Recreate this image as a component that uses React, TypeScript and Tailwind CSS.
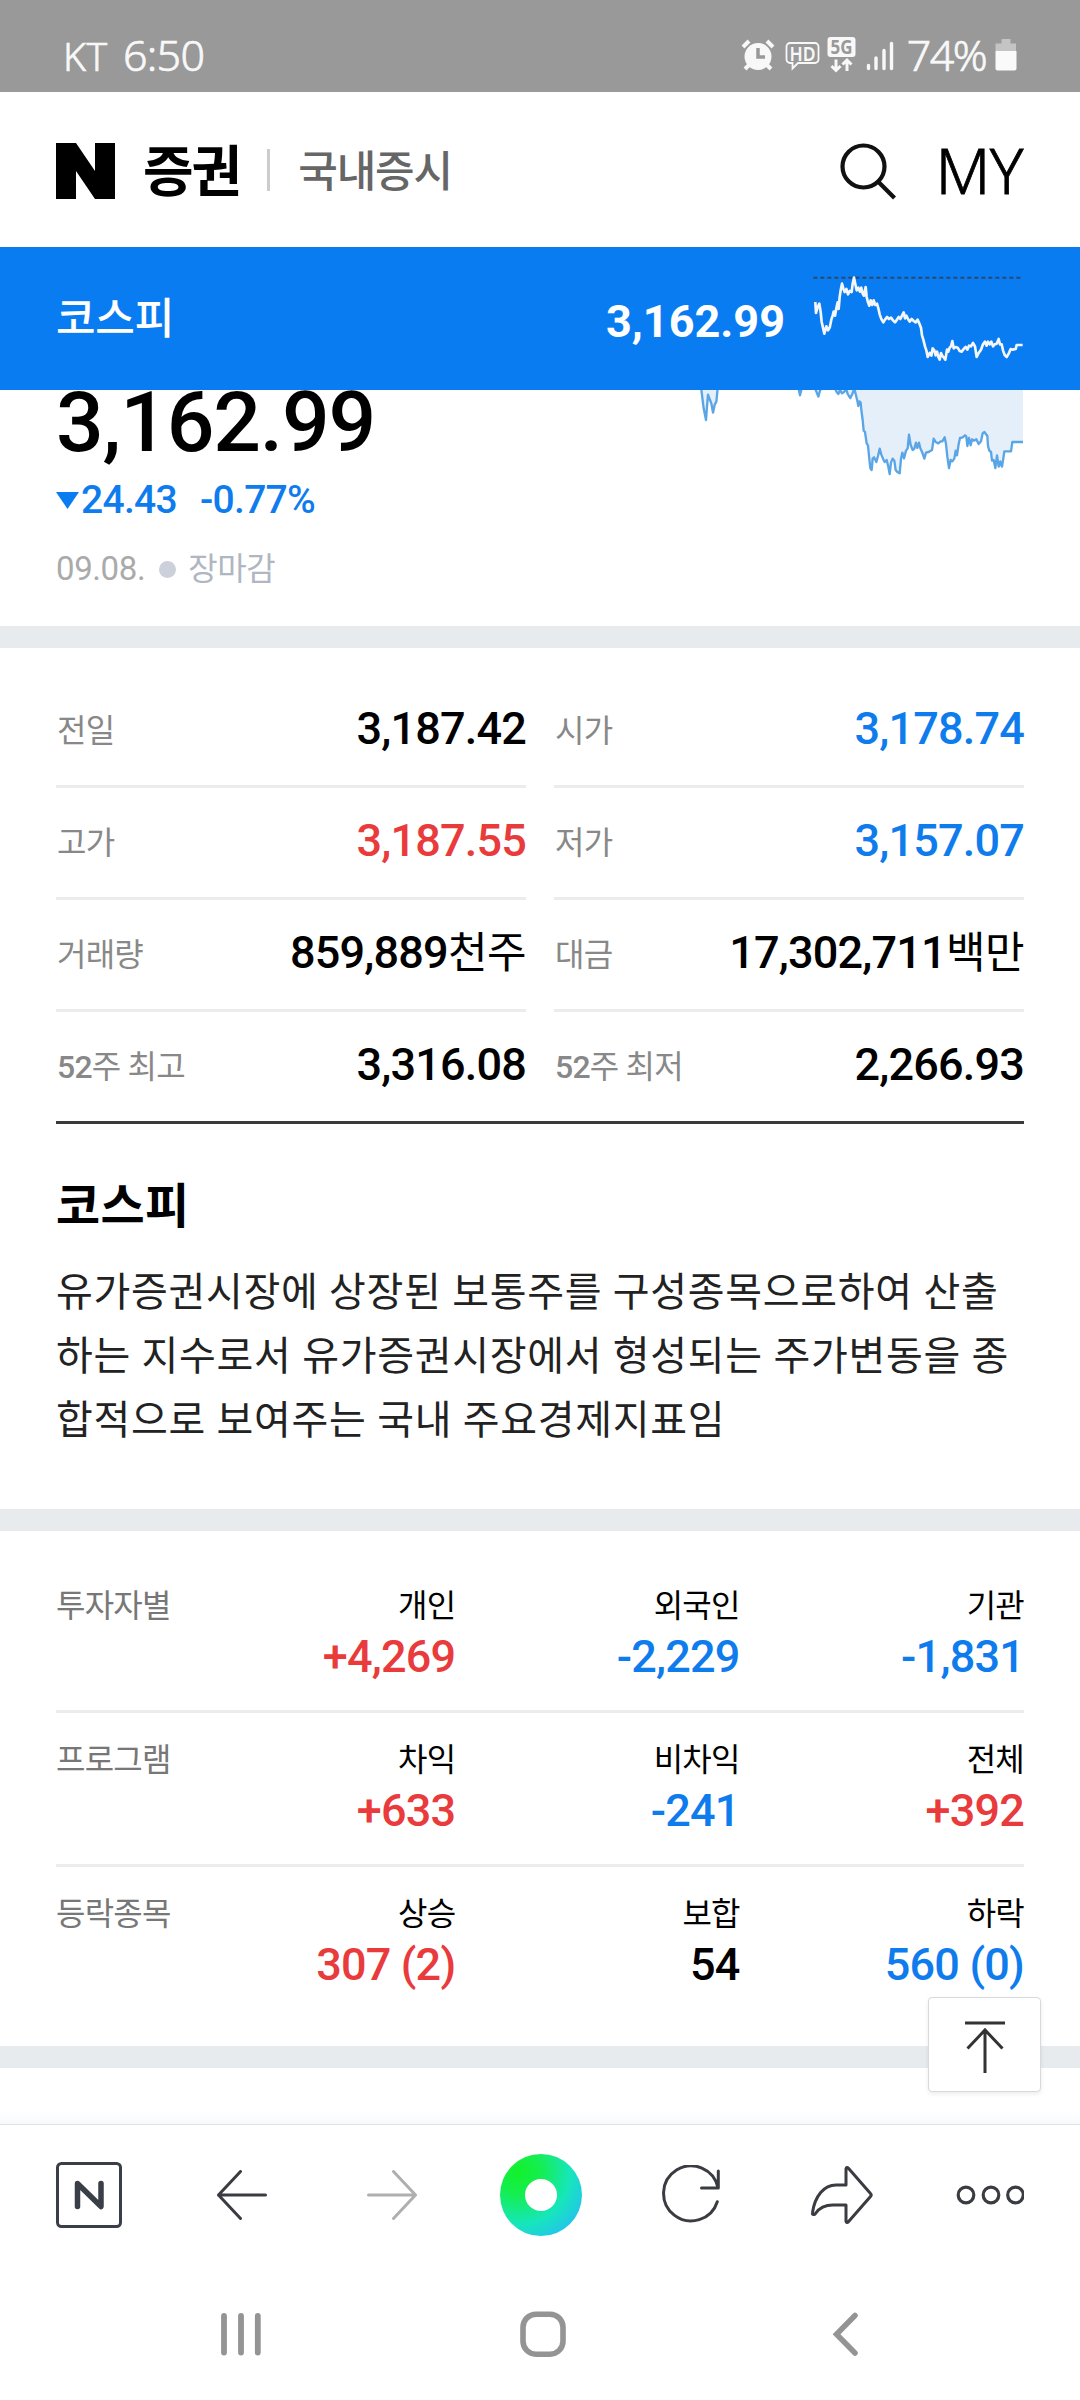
import React from 'react';

type Tone = 'up' | 'down' | 'flat';

interface Quote {
  label: React.ReactNode;
  value: string;
  unit?: string;
  tone?: Tone;
}

interface Cell {
  label: string;
  value: string;
  tone: Tone;
}

interface TrendRow {
  title: string;
  cells: Cell[];
}

const toneClasses: Record<Tone, string> = {
  up: 'text-[#e93a3c]',
  down: 'text-[#0f7cee]',
  flat: 'text-black'
};

const quotes: Quote[][] = [
  [
    { label: '전일', value: '3,187.42' },
    { label: '시가', value: '3,178.74', tone: 'down' }
  ],
  [
    { label: '고가', value: '3,187.55', tone: 'up' },
    { label: '저가', value: '3,157.07', tone: 'down' }
  ],
  [
    { label: '거래량', value: '859,889', unit: '천주' },
    { label: '대금', value: '17,302,711', unit: '백만' }
  ],
  [
    { label: <><span className="font-medium">52</span>주 최고</>, value: '3,316.08' },
    { label: <><span className="font-medium">52</span>주 최저</>, value: '2,266.93' }
  ]
];

const trends: TrendRow[] = [
  {
    title: '투자자별',
    cells: [
      { label: '개인', value: '+4,269', tone: 'up' },
      { label: '외국인', value: '-2,229', tone: 'down' },
      { label: '기관', value: '-1,831', tone: 'down' }
    ]
  },
  {
    title: '프로그램',
    cells: [
      { label: '차익', value: '+633', tone: 'up' },
      { label: '비차익', value: '-241', tone: 'down' },
      { label: '전체', value: '+392', tone: 'up' }
    ]
  },
  {
    title: '등락종목',
    cells: [
      { label: '상승', value: '307 (2)', tone: 'up' },
      { label: '보합', value: '54', tone: 'flat' },
      { label: '하락', value: '560 (0)', tone: 'down' }
    ]
  }
];

const sparkPoints =
  '705,185 707,218 712,200 717,190 721,215 724,245 728,262 732,280 738,258 743,270 748,262 753,238 757,226 760,214 764,226 768,204 772,186 775,206 778,170 781,150 785,130 789,145 793,155 798,146 803,162 808,152 814,155 817,130 821,112 825,132 829,150 834,142 839,154 843,142 847,160 851,166 856,140 859,170 863,186 867,196 871,180 876,194 880,180 885,194 890,190 894,204 898,222 903,236 909,246 914,238 920,230 926,236 932,232 938,240 944,246 950,238 955,230 960,236 965,226 970,216 974,234 978,226 983,236 988,244 994,236 1000,242 1006,246 1012,238 1018,252 1022,262 1025,285 1029,298 1034,318 1038,330 1042,350 1048,338 1053,346 1057,324 1062,330 1066,345 1070,334 1074,350 1078,358 1082,338 1087,348 1091,352 1095,358 1100,328 1104,334 1108,322 1112,318 1116,302 1120,324 1126,320 1132,322 1138,332 1144,334 1150,326 1156,320 1161,328 1166,316 1172,318 1178,308 1184,318 1189,350 1195,338 1202,328 1208,312 1214,304 1219,316 1223,304 1228,312 1233,304 1238,318 1243,312 1249,310 1255,296 1259,312 1264,312 1268,330 1273,344 1279,350 1285,340 1291,326 1297,328 1306,326 1309,314 1327,314';

const dipPoints = '361,440 364,465 369,505 376,540 379,500 382,464 388,480 392,490 397,518 402,494 407,485 410,455 412,440';

const midPoints = '652,440 655,452 658,466 663,446 700,440 706,452 713,470 719,448 760,440 768,456 773,462 778,450 784,460 790,456 797,448 801,462 806,470 809,474 815,462 821,446 825,462 830,482 833,498 836,484 840,488 842,510 846,540 849,572 853,576 858,610 862,616 865,648 869,684 873,690 876,656 880,652 887,666 892,648 897,626 902,644 907,656 912,666 918,660 923,680 927,702 931,668 936,656 941,662 945,690 950,696 957,700 961,656 965,638 970,655 976,632 981,625 985,584 990,615 996,630 1001,626 1006,608 1010,624 1015,608 1019,625 1025,638 1031,656 1036,638 1044,636 1054,630 1059,596 1065,606 1073,610 1080,604 1085,604 1092,592 1096,612 1100,650 1105,684 1110,660 1115,664 1121,656 1125,632 1129,646 1134,612 1138,594 1146,592 1153,586 1157,590 1160,618 1165,594 1170,616 1174,598 1180,602 1187,598 1194,612 1201,604 1206,580 1211,576 1220,588 1222,618 1226,632 1231,636 1234,662 1239,660 1244,684 1249,646 1254,680 1259,664 1264,680 1267,662 1271,634 1291,634 1295,606 1327,606';

const StatusBar: React.FC = () => (
  <div className="flex h-[92px] items-start justify-between bg-[#999] pl-[63px] pr-[63px] font-['Noto_Sans',sans-serif] text-[#f8f8f8]">
    <div className="flex items-baseline gap-[15px] pt-[23px] font-light leading-[64px] [-webkit-text-stroke:0.7px_#f8f8f8]">
      <span className="text-[39px] tracking-[0.6px]">KT</span>
      <span className="text-[43px] tracking-[-0.7px]">6:50</span>
    </div>
    <div className="flex">
      <svg className="mt-[38px]" width="34" height="34" viewBox="0 0 34 34" fill="none" stroke="#f8f8f8">
        <circle cx="17" cy="18.500" r="13.500" fill="#f8f8f8" stroke="none" />
        <path d="M2 9l6-6M32 9l-6-6" strokeWidth="4" />
        <path d="M8 27l-4 4M26 27l4 4" strokeWidth="4" />
        <path d="M17 10v9h7" stroke="#999" strokeWidth="3.500" />
      </svg>
      <svg className="ml-[10px] mt-[41px] overflow-visible" width="35" height="31" viewBox="0 0 35 31">
        <path
          d="M5 2h25a3.500 3.500 0 0 1 3.500 3.500v13a3.500 3.500 0 0 1-3.500 3.500H13l-5.500 5.500V22H5a3.500 3.500 0 0 1-3.500-3.500v-13A3.500 3.500 0 0 1 5 2z"
          fill="none"
          stroke="#f8f8f8"
          strokeWidth="1.800"
        />
        <text x="17.500" y="19.500" textAnchor="middle" fontSize="20" fontWeight="600" textLength="26" lengthAdjust="spacingAndGlyphs" fill="#f8f8f8">HD</text>
      </svg>
      <svg className="ml-[7px] mt-[36px] overflow-visible" width="29" height="38" viewBox="0 0 29 38">
        <rect x="0.500" y="1" width="28" height="20" rx="3" fill="#f8f8f8" />
        <text x="14.500" y="18" textAnchor="middle" fontSize="20" fontWeight="700" textLength="22" lengthAdjust="spacingAndGlyphs" fill="#999">5G</text>
        <path d="M9 23.500v11M4.500 30L9 34.500l4.500-4.500M20 35V24.500M15.500 28.500L20 24l4.500 4.500" fill="none" stroke="#f8f8f8" strokeWidth="3" />
      </svg>
      <svg className="ml-[10px] mt-[40px]" width="28" height="31" viewBox="0 0 28 31" stroke="#f8f8f8" strokeWidth="3.400" strokeLinecap="round">
        <path d="M2.500 25.500v3M10 18v10.500M18 10.500v18M25.500 3.500v25" />
      </svg>
      <span className="ml-[13px] mt-[23px] text-[43px] font-light leading-[64px] tracking-[-1.6px] [-webkit-text-stroke:0.7px_#f8f8f8]">74%</span>
      <svg className="ml-[9px] mt-[39px]" width="22" height="32" viewBox="0 0 22 32">
        <path d="M6.500 0h9v4.500H21V12H0.500V4.500h6z" fill="#c4c4c4" />
        <path d="M0.500 12h21v17.500a2 2 0 0 1-2 2h-17a2 2 0 0 1-2-2z" fill="#fafafa" />
      </svg>
    </div>
  </div>
);

const Header: React.FC = () => (
  <header className="flex h-[155px] items-center bg-white pl-[56px] pr-[57px] pt-[3px]">
    <svg width="59" height="56" viewBox="0 0 59 56">
      <path d="M0 0h20l19 28V0h20v56H39L20 28v28H0z" />
    </svg>
    <h1 className="ml-[28px] pt-[2px] text-[55px] font-bold leading-none tracking-[-2px]">증권</h1>
    <span className="-mt-[3px] ml-[27px] mr-[28px] h-[42px] w-[3px] bg-[#ccc]" />
    <span className="pt-[2px] text-[43px] font-medium leading-none tracking-[-1.1px] text-[#666]">국내증시</span>
    <svg className="ml-auto" width="57" height="57" viewBox="0 0 57 57" fill="none" stroke="#111" strokeWidth="4.200">
      <circle cx="23.500" cy="23.500" r="21" />
      <path d="M38 38.500L54.500 55" />
    </svg>
    <span className="-mt-[3px] ml-[38px] font-['Noto_Sans',sans-serif] text-[63px] font-light leading-[64px] tracking-[-0.6px] [-webkit-text-stroke:0.8px_#000]">MY</span>
  </header>
);

const IndexBar: React.FC = () => (
  <div className="relative z-10 flex h-[143px] items-center bg-[#0a7cf2] px-[56px] text-white">
    <span className="pt-[2px] text-[43px] font-medium leading-none tracking-[-0.2px]">코스피</span>
    <span className="ml-auto pt-[5px] text-[45px] font-bold leading-none">3,162.99</span>
    <svg className="-mt-[1px] ml-[28px]" width="211" height="90" viewBox="698 98 633 270" fill="none">
      <path d="M699 112H1327" stroke="#2b4a6b" strokeWidth="6" strokeDasharray="12 9" />
      <polyline points={sparkPoints} stroke="#f4f6f8" strokeWidth="8" strokeLinejoin="round" />
    </svg>
  </div>
);

const PriceSection: React.FC = () => (
  <section className="flex h-[236px] justify-between px-[56px]">
    <div>
      <p className="text-[84px] font-medium leading-[66px] tracking-[-1.2px]">3,162.99</p>
      <div className="mt-[22px] flex items-center text-[39px] font-medium leading-[44px] tracking-[-0.7px] text-[#0f7cee]">
        <svg width="23" height="17" viewBox="0 0 23 17">
          <path d="M0 0h23L11.500 17z" fill="#0a7cf2" />
        </svg>
        <span className="ml-[2px]">24.43</span>
        <span className="ml-[23px]">-0.77%</span>
      </div>
      <div className="mt-[27px] flex items-center text-[33px] leading-[40px] tracking-[-0.4px] text-[#aaa]">
        <span>09.08.</span>
        <span className="ml-[14px] size-[17px] rounded-full bg-[#cbd0da]" />
        <span className="ml-[12px] text-[32px] text-[#b0b6c2]">장마감</span>
      </div>
    </div>
    <svg width="340" height="90" viewBox="310 450 1020 270" fill="none">
      <path d="M360 450h52l-5 35-10 33-15-54-6 76z" fill="#e5effa" />
      <polygon points={`${midPoints} 1327,440`} fill="#e5effa" />
      <polyline points={dipPoints} stroke="#5aa5e6" strokeWidth="7" strokeLinejoin="round" />
      <polyline points={midPoints} stroke="#5aa5e6" strokeWidth="7" strokeLinejoin="round" />
    </svg>
  </section>
);

const QuoteTable: React.FC = () => (
  <div className="border-b-[3px] border-[#3a3a3c]">
    {quotes.map((row, rowIndex) => (
      <div key={rowIndex} className="flex gap-[28px]">
        {row.map(({ label, value, unit, tone = 'flat' }) => (
          <dl
            key={value}
            className={`flex flex-1 items-center justify-between border-[#ececec] ${
              rowIndex < quotes.length - 1 ? 'h-[112px] border-b-[3px]' : 'h-[109px]'
            }`}
          >
            <dt className="pl-[1px] text-[32px] leading-[40px] tracking-[-0.8px] text-[#888]">{label}</dt>
            <dd className={`flex items-baseline pb-[3px] text-[45px] font-medium leading-[50px] tracking-[-0.8px] ${toneClasses[tone]}`}>
              {value}
              {unit && <span className="text-[43px] font-normal tracking-[-0.5px]">{unit}</span>}
            </dd>
          </dl>
        ))}
      </div>
    ))}
  </div>
);

const TrendTable: React.FC = () => (
  <section className="px-[56px] pt-[28px]">
    {trends.map((row, index) => (
      <div
        key={row.title}
        className={`flex border-[#ececec] text-[32px] leading-[40px] tracking-[-0.8px] ${
          index < trends.length - 1 ? 'h-[154px] border-b-[3px]' : 'h-[179px]'
        }`}
      >
        <h3 className="w-[115px] whitespace-nowrap pt-[27px] text-[#777]">{row.title}</h3>
        {row.cells.map(cell => (
          <div key={cell.label} className="flex-1 pt-[27px] text-right">
            <p>{cell.label}</p>
            <p className={`pt-[1px] text-[45px] font-medium leading-[60px] ${toneClasses[cell.tone]}`}>{cell.value}</p>
          </div>
        ))}
      </div>
    ))}
  </section>
);

const Toolbar: React.FC = () => (
  <nav className="flex h-[142px] items-center border-t border-[#dfe2e7] bg-white px-[56px] pb-px">
    <svg width="66" height="66" viewBox="0 0 66 66" fill="none" stroke="#3a3f47">
      <rect x="1.500" y="1.500" width="63" height="63" rx="4" strokeWidth="3" />
      <path d="M21.500 44.500v-23l23.500 23v-23" strokeWidth="5.500" strokeLinecap="round" strokeLinejoin="round" />
    </svg>
    <svg className="ml-[95px]" width="50" height="50" viewBox="0 0 50 50" fill="none" stroke="#3a3c42" strokeWidth="3" strokeLinecap="round" strokeLinejoin="round">
      <path d="M48.500 25H1.500M23.500 1.500L1.500 25l22 23.500" />
    </svg>
    <svg className="ml-[100px]" width="50" height="50" viewBox="0 0 50 50" fill="none" stroke="#afafaf" strokeWidth="3" strokeLinecap="round" strokeLinejoin="round">
      <path d="M1.500 25h47M26.500 1.500l22 23.500-22 23.500" />
    </svg>
    <div className="ml-[83px] flex size-[82px] items-center justify-center rounded-full bg-[radial-gradient(circle_at_22%_22%,#12f12b_0%,#15ee50_25%,#16e6bc_58%,#22c8e6_80%,#24bdf6_95%)]">
      <span className="size-[32px] rounded-full bg-white" />
    </div>
    <svg className="ml-[79px]" width="60" height="60" viewBox="0 0 60 60" fill="none" stroke="#3a3c42" strokeWidth="3" strokeLinecap="round" strokeLinejoin="round">
      <path d="M56.300 36.700A27.500 27.500 0 1 1 57 22.800M57.300 6v17H40.500" />
    </svg>
    <svg className="ml-[88px]" width="64" height="60" viewBox="0 0 64 60" fill="none" stroke="#3a3c42" strokeWidth="3" strokeLinejoin="round">
      <path d="M37 3.500c.3-1.200 1.400-1.400 2.200-.5L61.500 28.500c1 1 1 2 0 3L39.200 57c-.8.900-1.900.7-2.200-.5V40H24C14 40 9.500 44 6.500 48.500c-1.200 1.600-3.500 1.200-3-1C6 31 15 20 27 20h10z" />
    </svg>
    <svg className="ml-auto" width="68" height="20" viewBox="0 0 68 20" fill="none" stroke="#3a3c42" strokeWidth="3.200">
      <circle cx="10" cy="10" r="7.800" />
      <circle cx="35" cy="10" r="7.800" />
      <circle cx="59.500" cy="10" r="7.800" />
    </svg>
  </nav>
);

const SystemNav: React.FC = () => (
  <div className="flex h-[134px] items-start bg-white pl-[221px] pt-[45px]">
    <svg width="40" height="46" viewBox="0 0 40 46" stroke="#949494" strokeWidth="5.800" strokeLinecap="round">
      <path d="M3 5v36.500M20 5v36.500M36.800 5v36.500" />
    </svg>
    <svg className="ml-[259px]" width="46" height="46" viewBox="0 0 46 46" fill="none">
      <rect x="3" y="3.200" width="40" height="40" rx="13" stroke="#949494" strokeWidth="5.600" />
    </svg>
    <svg className="ml-[266px]" width="28" height="46" viewBox="0 0 28 46" fill="none" stroke="#949494" strokeWidth="5.500" strokeLinecap="round">
      <path d="M23 4.500L4.500 23.200 23 42" />
    </svg>
  </div>
);

const App: React.FC = () => {
  return (
    <div className="relative flex h-[2400px] w-[1080px] flex-col overflow-hidden bg-white font-['Roboto','Noto_Sans_CJK_KR',sans-serif] text-black">
      <StatusBar />
      <Header />
      <IndexBar />
      <PriceSection />
      <div className="h-[22px] bg-[#e7ebee]" />

      <section className="h-[861px] px-[56px] pt-[28px]">
        <QuoteTable />
        <h2 className="mt-[56px] text-[48px] font-bold leading-[54px] tracking-[0.4px]">코스피</h2>
        <p className="mt-[27px] whitespace-nowrap text-[40px] leading-[64px] tracking-[0.7px] text-[#222]">
          유가증권시장에 상장된 보통주를 구성종목으로하여 산출
          <br />
          하는 지수로서 유가증권시장에서 형성되는 주가변동을 종
          <br />
          합적으로 보여주는 국내 주요경제지표임
        </p>
      </section>

      <div className="h-[22px] bg-[#e7ebee]" />
      <TrendTable />
      <div className="mt-auto h-[22px] shrink-0 bg-[#e7ebee]" />
      <div className="flex h-[56px] shrink-0 items-end">
        <div className="h-[12px] w-full bg-linear-to-b from-white to-[#f6f8fa]" />
      </div>
      <Toolbar />
      <SystemNav />

      <button
        type="button"
        aria-label="맨 위로"
        className="absolute left-[928px] top-[1997px] flex h-[95px] w-[113px] items-center justify-center rounded-[4px] border border-[#d6d9dd] bg-white pt-[5px] shadow-[0_2px_4px_rgba(0,0,0,0.08)]"
      >
        <svg width="40" height="52" viewBox="0 0 40 52" fill="none" stroke="#333" strokeWidth="3">
          <path d="M0 2h40M20 52V9M2.500 27.500L20 9l17.500 18.500" />
        </svg>
      </button>
    </div>
  );
};

export default App;
